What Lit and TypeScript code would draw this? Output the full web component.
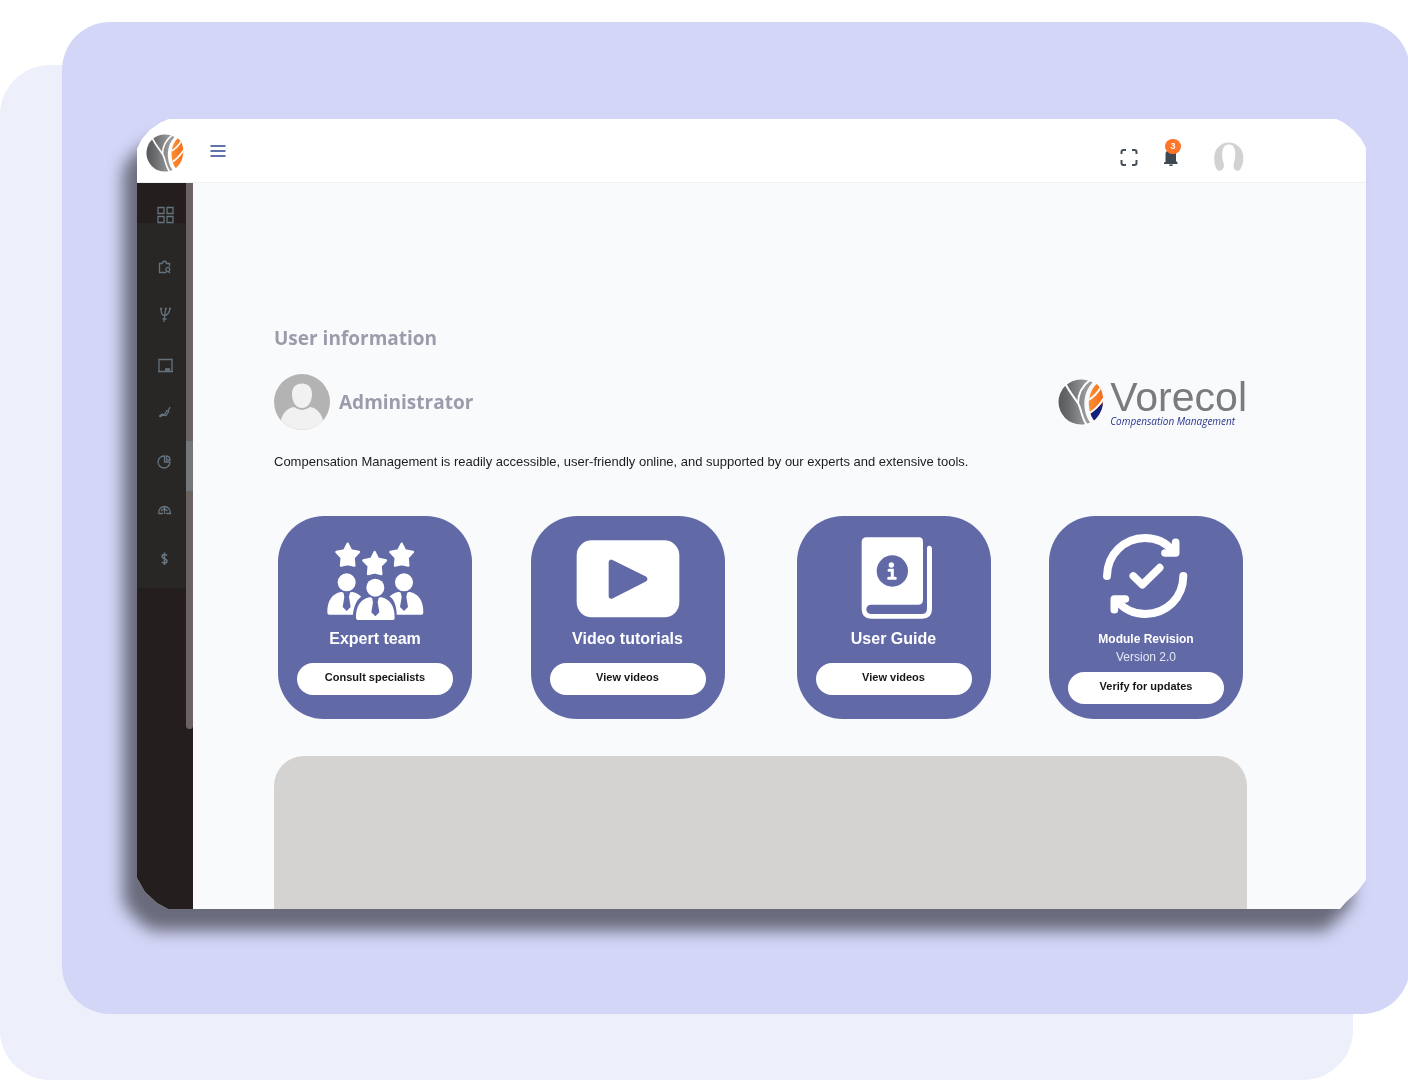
import { LitElement, html, svg, css } from "lit";
import { customElement, property } from "lit/decorators.js";

/** Round Vorecol mark: grey globe with a "V" cut and a striped leaf. */
@customElement("brand-mark")
class BrandMark extends LitElement {
  @property({ type: Boolean }) twoTone = false;

  static styles = css`
    :host { display: block; }
    .mark { display: block; width: 100%; height: auto; }
    .cut { fill: none; stroke: #fff; stroke-width: 2; }
  `;

  render() {
    return html`<svg class="mark" viewBox="0 0 46 46" aria-hidden="true">
      <defs>
        <linearGradient id="globe" x1="0" y1="0" x2="1" y2="0">
          <stop offset="0" stop-color="#57585a" />
          <stop offset=".3" stop-color="#6a6b6d" />
          <stop offset=".8" stop-color="#98999b" />
        </linearGradient>
        <linearGradient id="leaf" x1="0" y1="0" x2="1" y2="0">
          <stop offset="0" stop-color="#fb9a3c" />
          <stop offset="1" stop-color="#f56a1a" />
        </linearGradient>
        <clipPath id="leafclip"><path d="M38.5 5C43 8 45.500 15 45 23C44.500 31 41 37 36 41.500C28.500 31 29 14 38.500 5Z" /></clipPath>
      </defs>
      <path fill="url(#globe)" d="M23 .5C27 .5 31.500 1.500 34.500 3.500C25 13 23.500 31 32 43.500C29 45 26 45.500 23 45.500A22.500 22.500 0 0 1 23 .5Z" />
      <path class="cut" d="M7.500 5C12 14 17 19 20.500 25C23.500 31 24 40 29 46" />
      <path class="cut" d="M32 1C24 7 20 15 20 24.500" />
      <g clip-path="url(#leafclip)">
        <rect x="27" y="4" width="19" height="38" fill="url(#leaf)" />
        ${this.twoTone ? svg`<path fill="#14207e" d="M29 38L46 23V42H29Z" />` : null}
        <path class="cut" d="M28 22C35 19 39 15 43 8M28 36C36 32 40 28 46 19" />
      </g>
    </svg>`;
  }
}

const navIcons = [
  { label: "Dashboard", art: svg`<path d="M5 3.500h6v6H5zM14 3.500h6v6h-6zM5 12.500h6v6H5zM14 12.500h6v6h-6z" />` },
  { label: "Job search", art: svg`<path d="M9.500 10.500H6.500v9h7M9.500 10.500c0-3 4-3 4 0H16.500v3M13.500 15a2 2 0 1 1 0 3a2 2 0 0 1 0-3M15.500 18.500l1.500 1.500" />` },
  { label: "Structure", art: svg`<path d="M8 6.500c0 5 1 7 3.500 7S16 11.500 17 6.500M12.800 6l-2 14M9.500 17h4M7 6.500h2M16 6.500h2M11.800 6.500h2" />` },
  { label: "Board", art: svg`<path d="M6 8.500h13v12H6z M5 20.500h15" /><path d="M12 18.500h5" stroke-width="2.500" />` },
  { label: "Trends", art: svg`<path d="M6 16.500l3-2.500 2 1 3-4.500 1 .500 2-4M7 17l3-2 3 .500 3-4.500" />` },
  { label: "Statistics", art: svg`<path d="M11.500 7a6 6 0 1 0 5.500 6h-5.500zM13.500 7v4H17c0-2-1.500-3.800-3.500-4z" />` },
  { label: "Performance", art: svg`<path d="M5.500 15.500c0-4 2.500-7 6-7s6 3 6 7h-4.500M5.500 15.500H10M11.500 9v7M8 13l3.500-2.500 3 2.500" />` },
  { label: "Payroll", art: svg`<path d="M14 8.500c-1-1.500-5-1.500-5 1s5 2 5 4.500-4 2.500-5 1M11.500 5.500v12.500" stroke-width="1.600" />` },
];

const person = (x: number, y: number) => svg`
  <g transform="translate(${x} ${y})">
    <circle cx="0" cy="-70" r="27" />
    <path d="M-58 21C-59-14-43-37-17-41Q-9-42-9-36L-7-26L-12 4L0 16L12 4L7-26L9-36Q9-42 17-41C43-37 59-14 58 21Q58 27 52 27H-52Q-58 27-58 21Z" />
  </g>`;

const star = (x: number, y: number) => svg`
  <path transform="translate(${x} ${y})" stroke="#fff" stroke-width="7" stroke-linejoin="round"
    d="M0-33L10-13L34-8L18 9L20 33L0 28L-20 33L-18 9L-34-8L-10-13Z" />`;

const teamIcon = svg`<svg class="art" viewBox="159 87 312 252" aria-hidden="true">
  <g fill="#fff">${star(233, 149)}${star(314, 174)}${star(395, 149)}${person(230, 302)}${person(402, 302)}</g>
  <path fill="#616aa7" d="M248 352C247 305 262 272 290 270A33 33 0 1 1 344 270C374 272 382 305 381 352Z" />
  <g fill="#fff">${person(316, 318)}</g>
</svg>`;

const videoIcon = svg`<svg class="art" viewBox="166 84 312 252" aria-hidden="true">
  <rect x="168" y="103" width="308" height="231" rx="45" fill="#fff" />
  <path fill="#616aa7" stroke="#616aa7" stroke-width="16" stroke-linejoin="round" d="M272 169V270L372 219Z" />
</svg>`;

const guideIcon = svg`<svg class="art" viewBox="156 87 312 252" aria-hidden="true">
  <path fill="#fff" d="M230 97H386Q399 97 399 110V284Q399 299 384 299H242Q229 301 229 313T242 327H395Q411 327 411 311V130Q411 122 418 122T426 130V312Q426 341 397 341H243Q215 341 215 313V112Q215 97 230 97Z" />
  <circle cx="307" cy="198" r="47" fill="#616aa7" />
  <circle cx="304" cy="180" r="8" fill="#fff" />
  <path fill="none" stroke="#fff" stroke-width="9" stroke-linecap="round" d="M297 196H307V219M296 220H316" />
</svg>`;

const revisionIcon = svg`<svg class="art" viewBox="161 87 312 252" aria-hidden="true">
  <g fill="none" stroke="#fff" stroke-linecap="round" stroke-linejoin="round">
    <path stroke-width="24" d="M200 213C201 147 251 100 314 99C348 99 378 114 398 138M429 213C428 279 379 326 315 327C281 327 251 312 231 288" />
    <path stroke-width="23" d="M406 112V144H374M222 314V282H255" />
    <path stroke-width="23" d="M279 213L306 239L358 188" />
  </g>
</svg>`;

@customElement("action-card")
class ActionCard extends LitElement {
  @property() heading = "";
  @property() note = "";
  @property() action = "";
  @property({ attribute: false }) icon: unknown = null;

  static styles = css`
    :host { display: block; }
    .card {
      box-sizing: border-box; width: 194px; min-height: 203px; padding: 18px 19px 15px;
      display: flex; flex-direction: column; align-items: center;
      border-radius: 46px; background: #616aa7; color: #fff;
      font-family: "Liberation Sans", Arial, sans-serif;
    }
    .art { display: block; width: 104px; height: 84px; overflow: visible; }
    .title { margin: 11px 0 0; font-size: 16px; line-height: 20px; font-weight: 700; white-space: nowrap; }
    .title.small { font-size: 12px; }
    .note { margin: 0; font-size: 12px; line-height: 16px; color: #e6e8f5; }
    .button {
      box-sizing: border-box; width: 100%; height: 32px; margin-top: 14px; padding: 0 0 4px;
      border: 0; border-radius: 16px; background: #fff; color: #161616; cursor: pointer;
      font: 700 11px/16px "Liberation Sans", Arial, sans-serif;
    }
    .note + .button { margin-top: 7px; }
  `;

  render() {
    return html`<article class="card">
      ${this.icon}
      <h3 class="title ${this.note ? "small" : ""}">${this.heading}</h3>
      ${this.note ? html`<p class="note">${this.note}</p>` : null}
      <button class="button" type="button">${this.action}</button>
    </article>`;
  }
}

@customElement("app-root")
class AppRoot extends LitElement {
  static styles = css`
    :host { display: block; font-family: "Liberation Sans", Arial, sans-serif; }
    .stage { display: grid; min-height: 100vh; overflow: hidden; background: #fff; }
    .backdrop { grid-area: 1 / 1; margin: 65px 55px 0 0; border-radius: 50px; background: #edf0fa; }
    .panel {
      grid-area: 1 / 1; margin: 22px -2px 66px 62px; padding: 97px 44px 105px 75px;
      display: flex; border-radius: 48px; background: #d3d6f7;
    }
    .shadow { flex: 1; display: flex; min-width: 0; filter: drop-shadow(-14px 22px 8px rgba(0, 0, 0, 0.5)); }
    .window {
      flex: 1; min-width: 0; display: flex; flex-direction: column; background: #f8fafc;
      clip-path: polygon(
        0 30px, 5px 20px, 13px 11px, 23px 4px, 32px 0,
        calc(100% - 30px) 0, calc(100% - 22px) 4px, calc(100% - 13px) 11px, calc(100% - 5px) 20px, 100% 29px,
        100% calc(100% - 29px), calc(100% - 9px) calc(100% - 17px), calc(100% - 20px) calc(100% - 7px), calc(100% - 26px) 100%,
        31px 100%, 20px calc(100% - 6px), 8px calc(100% - 17px), 0 calc(100% - 31px)
      );
    }
    .topbar {
      box-sizing: border-box; height: 64px; padding: 0 122px 0 9px;
      display: flex; align-items: center; background: #fff; border-bottom: 1px solid #f0f1f3;
    }
    .home { display: block; width: 38px; margin-top: 4px; }
    .bare { display: block; padding: 0; border: 0; background: none; cursor: pointer; }
    .bare svg { display: block; }
    .menu { margin-left: 26px; }
    .tools { margin-left: auto; padding-top: 12px; display: flex; align-items: center; gap: 24px; }
    .alerts { position: relative; }
    .avatar-button { margin-left: 10px; }
    .badge {
      position: absolute; left: 3px; top: -9px; width: 16px; height: 15px; border-radius: 8px;
      background: #ff7427; color: #fff; font: 700 9px/15px "Liberation Sans", Arial, sans-serif; text-align: center;
    }
    .body { flex: 1; display: flex; }
    .sidebar { width: 56px; flex: none; display: flex; align-items: stretch; background: #241f1e; }
    .nav { flex: 1; align-self: flex-start; display: flex; flex-direction: column; padding: 8px 0 5px; background: linear-gradient(#241f1e 40px, #282725 40px); }
    .nav-link { height: 49px; padding-left: 16px; display: flex; align-items: center; color: #65737e; }
    .nav-link svg { display: block; fill: none; stroke: currentColor; stroke-width: 1.3; }
    .track { width: 7px; height: 546px; border-radius: 0 0 4px 4px; background: #6b6361; display: flex; flex-direction: column; }
    .thumb { height: 50px; margin-top: 258px; background: #73777b; }
    .content { flex: 1; min-width: 0; display: flex; flex-direction: column; padding: 142px 119px 0 81px; }
    .heading, .name { margin: 0; font: 700 19px/26px "Open Sans", "Noto Sans", sans-serif; color: #9c9bac; }
    .profile { margin-top: 23px; display: flex; align-items: center; }
    .name { margin-left: 9px; }
    .brand { margin-left: auto; display: flex; align-items: center; gap: 6px; }
    .brand-mark { width: 46px; }
    .brand-name { display: block; font-size: 41px; line-height: 38px; color: #7b7b7d; }
    .brand-line { display: block; font: italic 10px/10px "Open Sans", "Noto Sans", sans-serif; color: #2b358f; }
    .intro { margin: 22px 0 0; font-size: 13px; line-height: 20px; color: #1d1d1d; }
    .cards { margin: 44px 4px 0; display: flex; justify-content: space-between; }
    .pair { display: flex; gap: 72px; }
    .slate { flex: 1; min-height: 80px; margin-top: 37px; border-radius: 30px 30px 0 0; background: #d5d3d1; }
  `;

  render() {
    return html`<div class="stage">
      <div class="backdrop"></div>
      <div class="panel"><div class="shadow"><div class="window">
        <header class="topbar">
          <brand-mark class="home"></brand-mark>
          <button class="bare menu" type="button" aria-label="Toggle menu">
            <svg width="16" height="14" viewBox="0 0 16 14" fill="none" stroke="#5f74ad" stroke-width="2"><path d="M.5 2h15M.5 7h15M.5 12h15" /></svg>
          </button>
          <div class="tools">
            <button class="bare" type="button" aria-label="Full screen">
              <svg width="18" height="18" viewBox="0 0 18 18" fill="none" stroke="#454f59" stroke-width="2"><path d="M1.500 6V4Q1.500 2 3.500 2H6M12 2h2.500Q16.500 2 16.500 4V6M16.500 12v3Q16.500 17 14.500 17H12M6 17H3.500Q1.500 17 1.500 15V12" /></svg>
            </button>
            <button class="bare alerts" type="button" aria-label="Notifications">
              <svg width="18" height="18" viewBox="0 0 18 18" fill="#3d4852"><path d="M3.500 14V6Q3.500 2 9 2T14 6V13L15.500 14.500V16H2V14.500ZM7 16.500h4Q10.500 18.500 9 18.500T7 16.500Z" /></svg>
              <span class="badge">3</span>
            </button>
            <button class="bare avatar-button" type="button" aria-label="Account">
              <svg width="30" height="30" viewBox="0 0 30 30"><path fill="#d1d2d3" d="M4.500 29C1 26 0 21 .3 15A14.500 14.500 0 0 1 29.300 15C29.500 21 28 26 24.500 29L21 28Q18.500 25 20 21C23 10 21 2.500 14.800 2.500S6.500 10 9.500 21Q11 25 8 28Z" /></svg>
            </button>
          </div>
        </header>
        <div class="body">
          <aside class="sidebar">
            <nav class="nav" aria-label="Modules">
              ${navIcons.map((item) => html`<a class="nav-link" href="#" aria-label=${item.label}><svg width="24" height="24" viewBox="0 0 24 24">${item.art}</svg></a>`)}
            </nav>
            <div class="track"><div class="thumb"></div></div>
          </aside>
          <main class="content">
            <h1 class="heading">User information</h1>
            <section class="profile">
              <svg width="56" height="56" viewBox="0 0 56 56" aria-hidden="true">
                <defs><clipPath id="face"><circle cx="28" cy="28" r="28" /></clipPath></defs>
                <g clip-path="url(#face)">
                  <rect width="56" height="56" fill="#b3b3b3" />
                  <path fill="#f1f1f1" d="M28 9.500C34 9.500 38 13 38 20C38 28 34 34 28 34S18 28 18 20C18 13 22 9.500 28 9.500ZM7 46C9 38 14 34 20 33Q28 39 36 33C42 34 47 38 49 46V56H7Z" />
                </g>
              </svg>
              <h2 class="name">Administrator</h2>
              <div class="brand">
                <brand-mark class="brand-mark" .twoTone=${true}></brand-mark>
                <div><span class="brand-name">Vorecol</span><span class="brand-line">Compensation Management</span></div>
              </div>
            </section>
            <p class="intro">Compensation Management is readily accessible, user-friendly online, and supported by our experts and extensive tools.</p>
            <section class="cards">
              <action-card heading="Expert team" action="Consult specialists" .icon=${teamIcon}></action-card>
              <div class="pair">
                <action-card heading="Video tutorials" action="View videos" .icon=${videoIcon}></action-card>
                <action-card heading="User Guide" action="View videos" .icon=${guideIcon}></action-card>
              </div>
              <action-card heading="Module Revision" note="Version 2.0" action="Verify for updates" .icon=${revisionIcon}></action-card>
            </section>
            <div class="slate"></div>
          </main>
        </div>
      </div></div></div>
    </div>`;
  }
}
